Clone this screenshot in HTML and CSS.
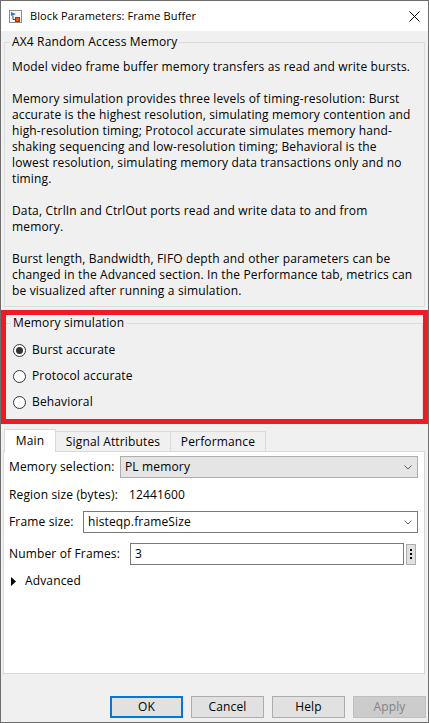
FILE: index.html
```html
<!DOCTYPE html>
<html>
<head>
<meta charset="utf-8">
<link rel="stylesheet" href="styles.css">
</head>
<body>
<div class="window">
  <div class="titlebar">
    <svg class="app-icon" width="13" height="13" viewBox="0 0 13 13">
      <rect x="0.5" y="0.5" width="12" height="12" fill="#f6f6f6" stroke="#8c8c8c"/>
      <path d="M4 5.5 V9.5 H6" fill="none" stroke="#4a4a4a" stroke-width="1"/>
      <polygon points="2,2 7,4 2,6" fill="#1f7fd6"/>
      <rect x="6.5" y="7.5" width="4" height="4" fill="#e8561f" stroke="#a0300f" stroke-width="1"/>
    </svg>
    <span class="title">Block Parameters: Frame Buffer</span>
    <svg class="close" width="11" height="11" viewBox="0 0 11 11">
      <path d="M0.5 0.5 L10.5 10.5 M10.5 0.5 L0.5 10.5" stroke="#000" stroke-width="1"/>
    </svg>
  </div>
  <div class="content">
    <fieldset class="group desc">
      <legend>AX4 Random Access Memory</legend>
      <p>Model video frame buffer memory transfers as read and write bursts.</p>
      <p>Memory simulation provides three levels of timing-resolution: Burst<br>accurate is the highest resolution, simulating memory contention and<br>high-resolution timing; Protocol accurate simulates memory hand-<br>shaking sequencing and low-resolution timing; Behavioral is the<br>lowest resolution, simulating memory data transactions only and no<br>timing.</p>
      <p>Data, CtrlIn and CtrlOut ports read and write data to and from<br>memory.</p>
      <p>Burst length, Bandwidth, FIFO depth and other parameters can be<br>changed in the Advanced section. In the Performance tab, metrics can<br>be visualized after running a simulation.</p>
    </fieldset>

    <div class="highlight">
      <fieldset class="group memsim">
        <legend>Memory simulation</legend>
        <div class="radio"><span class="dot checked"></span><span>Burst accurate</span></div>
        <div class="radio"><span class="dot"></span><span>Protocol accurate</span></div>
        <div class="radio"><span class="dot"></span><span>Behavioral</span></div>
      </fieldset>
    </div>

    <div class="tabs">
      <div class="tabbar">
        <div class="tab active tab-main">Main</div>
        <div class="tab tab-signal">Signal Attributes</div>
        <div class="tab tab-perf">Performance</div>
      </div>
      <div class="panel">
        <div class="row row-ctrl">
          <span class="label lbl-mem">Memory selection:</span>
          <div class="select select-disabled"><span class="sel-text">PL memory</span>
            <svg class="chev" width="8" height="5" viewBox="0 0 8 5"><path d="M0.5 0.5 L4 4 L7.5 0.5" fill="none" stroke="#606060"/></svg>
          </div>
        </div>
        <div class="row row-info">
          <span class="label lbl-region">Region size (bytes):</span>
          <span class="value">12441600</span>
        </div>
        <div class="row row-ctrl">
          <span class="label lbl-frame">Frame size:</span>
          <div class="select"><span class="sel-text">histeqp.frameSize</span>
            <svg class="chev" width="8" height="5" viewBox="0 0 8 5"><path d="M0.5 0.5 L4 4 L7.5 0.5" fill="none" stroke="#606060"/></svg>
          </div>
        </div>
        <div class="row row-ctrl row-num">
          <span class="label lbl-num">Number of Frames:</span>
          <div class="input">3</div>
          <div class="more"><i></i><i></i><i></i></div>
        </div>
        <div class="row row-adv">
          <svg class="tri" width="5" height="9" viewBox="0 0 5 9"><polygon points="0,0 5,4.5 0,9" fill="#000"/></svg>
          <span>Advanced</span>
        </div>
      </div>
    </div>

    <div class="footer">
      <div class="btn btn-default">OK</div>
      <div class="btn">Cancel</div>
      <div class="btn">Help</div>
      <div class="btn btn-disabled">Apply</div>
    </div>
  </div>
</div>
</body>
</html>
```
FILE: styles.css
```css
* { box-sizing: border-box; }
html, body { margin: 0; padding: 0; }
body {
  width: 429px;
  height: 723px;
  font-family: "Open Sans", "Noto Sans", sans-serif;
  font-size: 12px;
  line-height: 16px;
  letter-spacing: 0.15px;
  color: #000;
  background: #f0f0f0;
}
.window {
  width: 429px;
  height: 723px;
  border: 1px solid #6e6e6e;
  display: flex;
  flex-direction: column;
  background: #f0f0f0;
}
.titlebar {
  height: 30px;
  flex: none;
  background: #fff;
  display: flex;
  align-items: center;
  padding-left: 8px;
}
.app-icon { flex: none; margin-top: 0; }
.title {
  margin-left: 8px;
  flex: 1;
  font-size: 11px;
  letter-spacing: 0.1px;
  white-space: nowrap;
}
.close { flex: none; margin-right: 8px; }

.content {
  flex: 1;
  display: flex;
  flex-direction: column;
  min-height: 0;
}

.group {
  border: 1px solid #dcdcdc;
  margin: 0;
  min-width: 0;
}
.group legend {
  padding: 0 2px;
  margin-left: -2px;
  line-height: 16px;
  height: 16px;
}

.desc {
  margin: 3px 3px 0 3px;
  padding: 9px 6px 7px 7px;
}
.desc p {
  margin: 0 0 16px;
  white-space: nowrap;
}
.desc p:last-child { margin-bottom: 0; }

.highlight {
  margin-top: 3px;
  border: 5px solid #ed1c24;
  flex: none;
}
.memsim {
  border-left: 0;
  border-bottom: 0;
  padding: 6px 0 4px 7px;
}
.radio {
  height: 26px;
  display: flex;
  align-items: center;
}
.dot {
  width: 13px;
  height: 13px;
  border: 1px solid #333;
  border-radius: 50%;
  background: #fff;
  margin-right: 6px;
  display: flex;
  align-items: center;
  justify-content: center;
  flex: none;
}
.dot.checked::after {
  content: "";
  width: 7px;
  height: 7px;
  border-radius: 50%;
  background: #333;
}

.tabs {
  margin: 5px 3px 0 2px;
  flex: none;
}
.tabbar {
  display: flex;
  align-items: flex-end;
  height: 22px;
  padding-left: 1px;
  position: relative;
  z-index: 1;
}
.tab {
  height: 20px;
  border: 1px solid #d9d9d9;
  border-bottom: 0;
  background: #f0f0f0;
  text-align: center;
  padding-top: 2px;
  margin-left: -1px;
  white-space: nowrap;
}
.tab:first-child { margin-left: 0; }
.tab.active {
  height: 23px;
  background: #fff;
  margin-bottom: -1px;
  padding-top: 3px;
  position: relative;
  z-index: 2;
}
.tab-main { width: 52px; }
.tab-signal { width: 116px; }
.tab-perf { width: 96px; }

.panel {
  height: 223px;
  background: #fff;
  border: 1px solid #d9d9d9;
  padding: 4px 6px 0 5px;
}
.row {
  display: flex;
  align-items: center;
  white-space: nowrap;
}
.row-ctrl { height: 22px; }
.row-info { height: 33px; }
.row-num { margin-top: 10px; margin-right: -2px; padding-right: 2px; }
.row-adv { height: 32px; padding-left: 2px; }
.label { flex: none; }
.lbl-mem { width: 111px; }
.lbl-region { width: 120px; }
.lbl-frame { width: 74px; }
.lbl-num { width: 121px; }

.select {
  flex: 1;
  height: 22px;
  border: 1px solid #7a7a7a;
  background: #fff;
  display: flex;
  align-items: center;
  padding-left: 4px;
}
.select-disabled {
  background: #e5e5e5;
  border-color: #adadad;
}
.sel-text { flex: 1; }
.chev { margin-right: 5px; flex: none; }

.input {
  flex: 1;
  height: 22px;
  border: 1px solid #7a7a7a;
  padding-left: 4px;
  display: flex;
  align-items: center;
}
.more {
  flex: none;
  width: 10px;
  height: 21px;
  margin-left: 2px;
  margin-right: 2px;
  border: 1px solid #adadad;
  background: #e1e1e1;
  display: flex;
  flex-direction: column;
  align-items: center;
  justify-content: center;
  gap: 2px;
}
.more i {
  display: block;
  width: 2px;
  height: 2px;
  background: #000;
}
.tri { margin-right: 9px; flex: none; }

.footer {
  flex: 1;
  display: flex;
  justify-content: flex-end;
  align-items: flex-end;
  gap: 8px;
  padding: 0 2px 4px 0;
}
.btn {
  width: 73px;
  height: 22px;
  border: 1px solid #adadad;
  background: #e1e1e1;
  display: flex;
  align-items: center;
  justify-content: center;
}
.btn-default { border: 2px solid #0078d7; }
.btn-disabled {
  background: #cccccc;
  border-color: #bfbfbf;
  color: #838383;
}
```
